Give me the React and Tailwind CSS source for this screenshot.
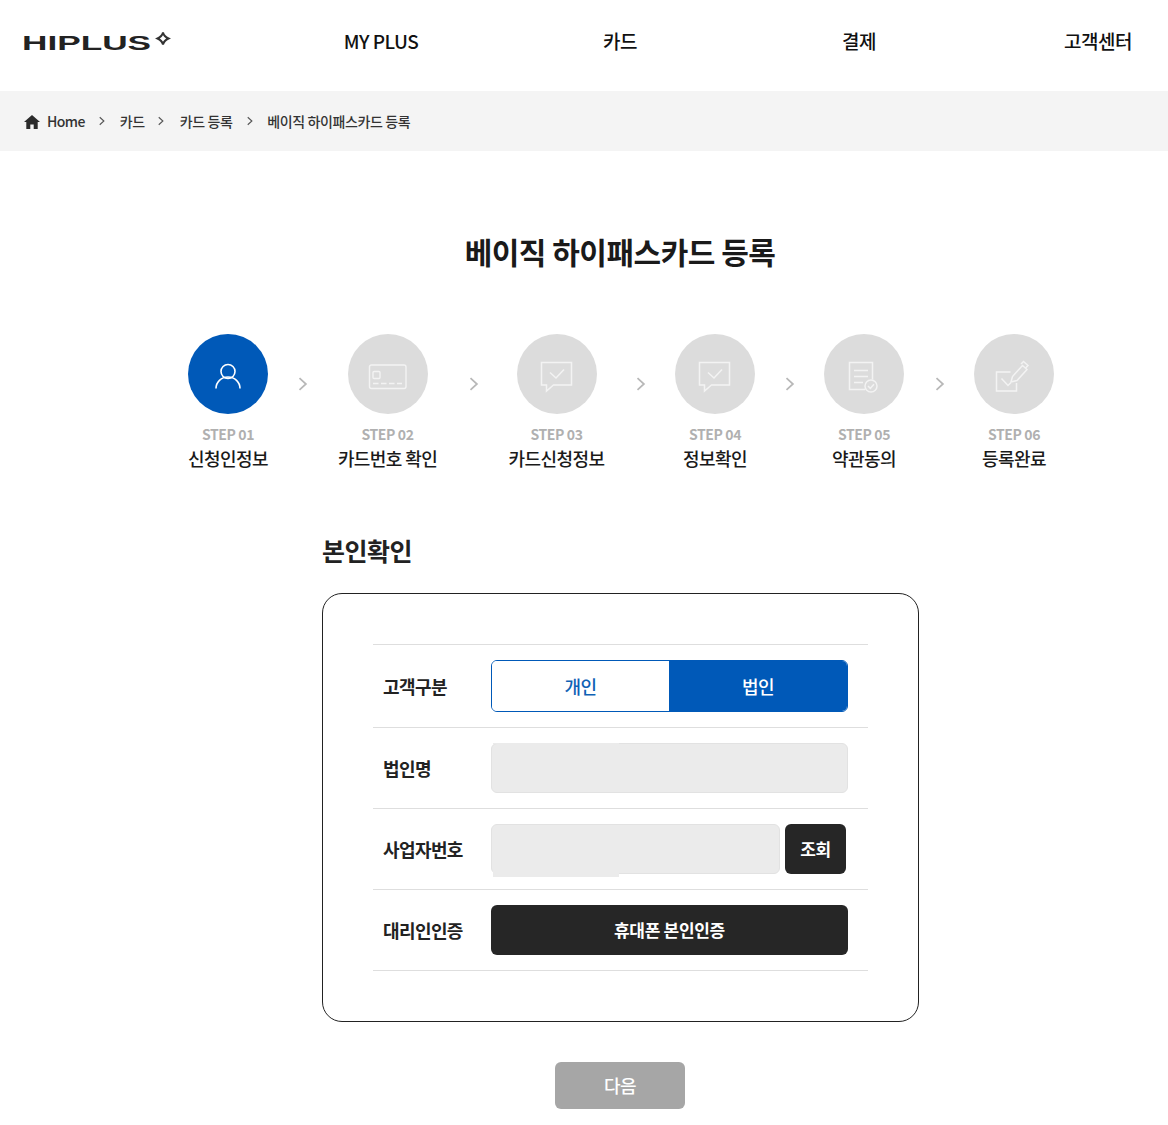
import React from 'react';

const FONT = "font-['Noto_Sans_CJK_KR','Noto_Sans',sans-serif]";

function Chevron({ className }) {
  return (
    <svg viewBox="0 0 8 12" fill="none" stroke="currentColor" strokeWidth="1.5" className={className}>
      <path d="M1 1l5.5 5L1 11" />
    </svg>
  );
}

function Logo() {
  return (
    <svg width="150" height="24" viewBox="0 0 150 24" className="block">
      <text
        x="0"
        y="20"
        textLength="129"
        lengthAdjust="spacingAndGlyphs"
        fontFamily="'Liberation Sans', sans-serif"
        fontWeight="700"
        fontSize="20"
        fill="#222"
      >
        HIPLUS
      </text>
      <path
        d="M141 2.500Q142 6.500 146.500 8.500 142 10.500 141 14.500 140 10.500 135.500 8.500 140 6.500 141 2.500z"
        fill="none"
        stroke="#333"
        strokeWidth="2"
      />
    </svg>
  );
}

function UserIcon() {
  return (
    <svg viewBox="0 0 80 80" fill="none" stroke="#fff" strokeWidth="1.6" className="w-20 h-20">
      <circle cx="40" cy="37.500" r="7" />
      <path d="M28 54.500c0-6.500 5.200-11.500 12-11.500s12 5 12 11.500" />
    </svg>
  );
}

function CardIcon() {
  return (
    <svg viewBox="0 0 80 80" fill="none" stroke="#f3f3f3" strokeWidth="1.4" className="w-20 h-20">
      <rect x="21.500" y="31" width="36.500" height="23.500" rx="2" />
      <rect x="25" y="37.500" width="7" height="7" rx="1" />
      <path d="M25 49.500h29" strokeDasharray="5.500 2.500" />
    </svg>
  );
}

function ChatIcon() {
  return (
    <svg viewBox="0 0 80 80" fill="none" stroke="#f3f3f3" strokeWidth="1.5" className="w-20 h-20">
      <path d="M24.500 28.500h30v22.500h-18l-7 6v-6h-5z" />
      <path d="M33 38.500l6 5.500 8-8.500" />
    </svg>
  );
}

function DocIcon() {
  return (
    <svg viewBox="0 0 80 80" fill="none" stroke="#f3f3f3" strokeWidth="1.5" className="w-20 h-20">
      <path d="M41 55.500H25.500V28.500h23v17" />
      <path d="M30 36.500h14M30 42.500h14M30 48.500h9" />
      <circle cx="47" cy="52" r="6" />
      <path d="M44 52l2.300 2.300 3.700-4" />
    </svg>
  );
}

function PenIcon() {
  return (
    <svg viewBox="0 0 80 80" fill="none" stroke="#f3f3f3" strokeWidth="1.5" className="w-20 h-20">
      <path d="M42.500 49v8h-20V38h14" />
      <path d="M27.500 44.500l6.500 7 3-3" />
      <path d="M37 48l1.500-5.500 10-11 4.500 4-10 11z" />
      <path d="M47 30l2.500-2.500 4.500 4-2.500 2.500" />
    </svg>
  );
}

const steps = [
  { no: 'STEP 01', name: '신청인정보', w: 'w-[80px]', gap: 'w-[69px]', icon: UserIcon, active: true },
  { no: 'STEP 02', name: '카드번호 확인', w: 'w-[101px]', gap: 'w-[70px]', icon: CardIcon },
  { no: 'STEP 03', name: '카드신청정보', w: 'w-[97px]', gap: 'w-[70px]', icon: ChatIcon },
  { no: 'STEP 04', name: '정보확인', w: 'w-[80px]', gap: 'w-[69px]', icon: ChatIcon },
  { no: 'STEP 05', name: '약관동의', w: 'w-[80px]', gap: 'w-[70px]', icon: DocIcon },
  { no: 'STEP 06', name: '등록완료', w: 'w-[80px]', icon: PenIcon },
];

function Row({ label, children, tall }) {
  return (
    <div className={`flex items-center border-b border-[#dedede] pl-[10px] ${tall ? 'h-[83px]' : 'h-[81px]'}`}>
      <div className="w-[108px] text-[18px] font-bold tracking-[-0.6px] text-[#222]">{label}</div>
      {children}
    </div>
  );
}

export default function App() {
  return (
    <div className={`w-[1168px] h-[1125px] overflow-hidden bg-white ${FONT}`}>
      <div className="w-[1240px]">
        {/* header */}
        <header className="flex items-center h-[91px] pl-[22px]">
          <div className="w-[239.500px] -mt-[7px]">
            <Logo />
          </div>
          <nav className="grid grid-cols-4 w-[956px] -mt-[8px] text-center text-[19px] font-medium tracking-[-0.5px] text-[#111]">
            <a>MY PLUS</a>
            <a>카드</a>
            <a>결제</a>
            <a>고객센터</a>
          </nav>
        </header>
      </div>

      {/* breadcrumb */}
      <div className="flex items-center h-[60px] bg-[#f4f4f4] pl-[24px] text-[14px] tracking-[-0.4px] text-[#333]">
        <svg viewBox="0 0 16 14" className="w-4 h-[14px] mt-[2px]" fill="#2b2b2b">
          <path d="M8 0L0 7h2.300v7h4v-4.500h3.400V14h4V7H16z" />
        </svg>
        <span className="ml-[7px] font-medium tracking-[-0.6px]">Home</span>
        <Chevron className="w-[6px] h-[10px] ml-[14px] text-[#555]" />
        <span className="ml-[15px] font-medium">카드</span>
        <Chevron className="w-[6px] h-[10px] ml-[13px] text-[#555]" />
        <span className="ml-[16px] font-medium">카드 등록</span>
        <Chevron className="w-[6px] h-[10px] ml-[15px] text-[#555]" />
        <span className="ml-[14px] font-medium">베이직 하이패스카드 등록</span>
      </div>

      <div className="w-[1240px]">
        <h1 className="mt-[76px] text-center text-[30px] leading-[48px] font-bold tracking-[-0.5px] text-[#1a1a1a]">
          베이직 하이패스카드 등록
        </h1>

        {/* steps */}
        <div className="flex items-start mt-[59px] ml-[188px]">
          {steps.map((s) => (
            <React.Fragment key={s.no}>
              <div className={`flex flex-col items-center ${s.w}`}>
                <div className={`w-20 h-20 rounded-full ${s.active ? 'bg-[#0059b8]' : 'bg-[#dcdcdc]'}`}>
                  <s.icon />
                </div>
                <div className="mt-[10px] text-[14px] leading-5 font-bold tracking-[-0.4px] text-[#b0b0b0] whitespace-nowrap">
                  {s.no}
                </div>
                <div className="mt-[1px] text-[18px] leading-[26px] font-medium tracking-[-0.6px] text-[#1a1a1a] whitespace-nowrap">
                  {s.name}
                </div>
              </div>
              {s.gap && (
                <div className={`flex justify-center pt-[43px] pl-[1px] ${s.gap}`}>
                  <Chevron className="w-[10px] h-[14px] text-[#b8b8b8]" />
                </div>
              )}
            </React.Fragment>
          ))}
        </div>

        {/* form */}
        <div className="w-[597px] ml-[322px] mt-[61px]">
          <h2 className="text-[25px] leading-9 font-bold tracking-[-0.5px] text-[#222]">본인확인</h2>
          <div className="mt-[25px] h-[429px] rounded-[20px] border border-[#222] px-[50px] pt-[50px]">
            <div className="border-t border-[#dedede]">
              <Row label="고객구분" tall>
                <div className="flex w-[357px] h-[52px] rounded-[6px] border border-[#0059b8] overflow-hidden text-[18px] font-medium tracking-[-0.5px]">
                  <button className="w-[177px] bg-white text-[#0f62b5]">개인</button>
                  <button className="flex-1 bg-[#0059b8] text-white">법인</button>
                </div>
              </Row>
              <Row label="법인명">
                <div className="relative w-[357px] h-[50px] rounded-[6px] bg-[#ebebeb] border border-[#e2e2e2]">
                  <div className="absolute left-[1px] -top-[1px] w-[126px] h-[1px] bg-[#ebebeb]" />
                </div>
              </Row>
              <Row label="사업자번호">
                <div className="relative w-[289px] h-[50px] rounded-[6px] bg-[#ebebeb] border border-[#e2e2e2]">
                  <div className="absolute left-[1px] -bottom-[4px] w-[126px] h-[6px] bg-[#ebebeb]" />
                </div>
                <button className="ml-[5px] w-[61px] h-[50px] rounded-[6px] bg-[#262626] text-white text-[17px] font-bold tracking-[-0.5px]">
                  조회
                </button>
              </Row>
              <Row label="대리인인증">
                <button className="w-[357px] h-[50px] rounded-[6px] bg-[#262626] text-white text-[17px] font-bold tracking-[-0.3px]">
                  휴대폰 본인인증
                </button>
              </Row>
            </div>
          </div>
          <button className="block ml-[233px] mt-[40px] w-[130px] h-[47px] rounded-[6px] bg-[#a6a6a6] text-white text-[18px] font-medium tracking-[-0.5px]">
            다음
          </button>
        </div>
      </div>
    </div>
  );
}
